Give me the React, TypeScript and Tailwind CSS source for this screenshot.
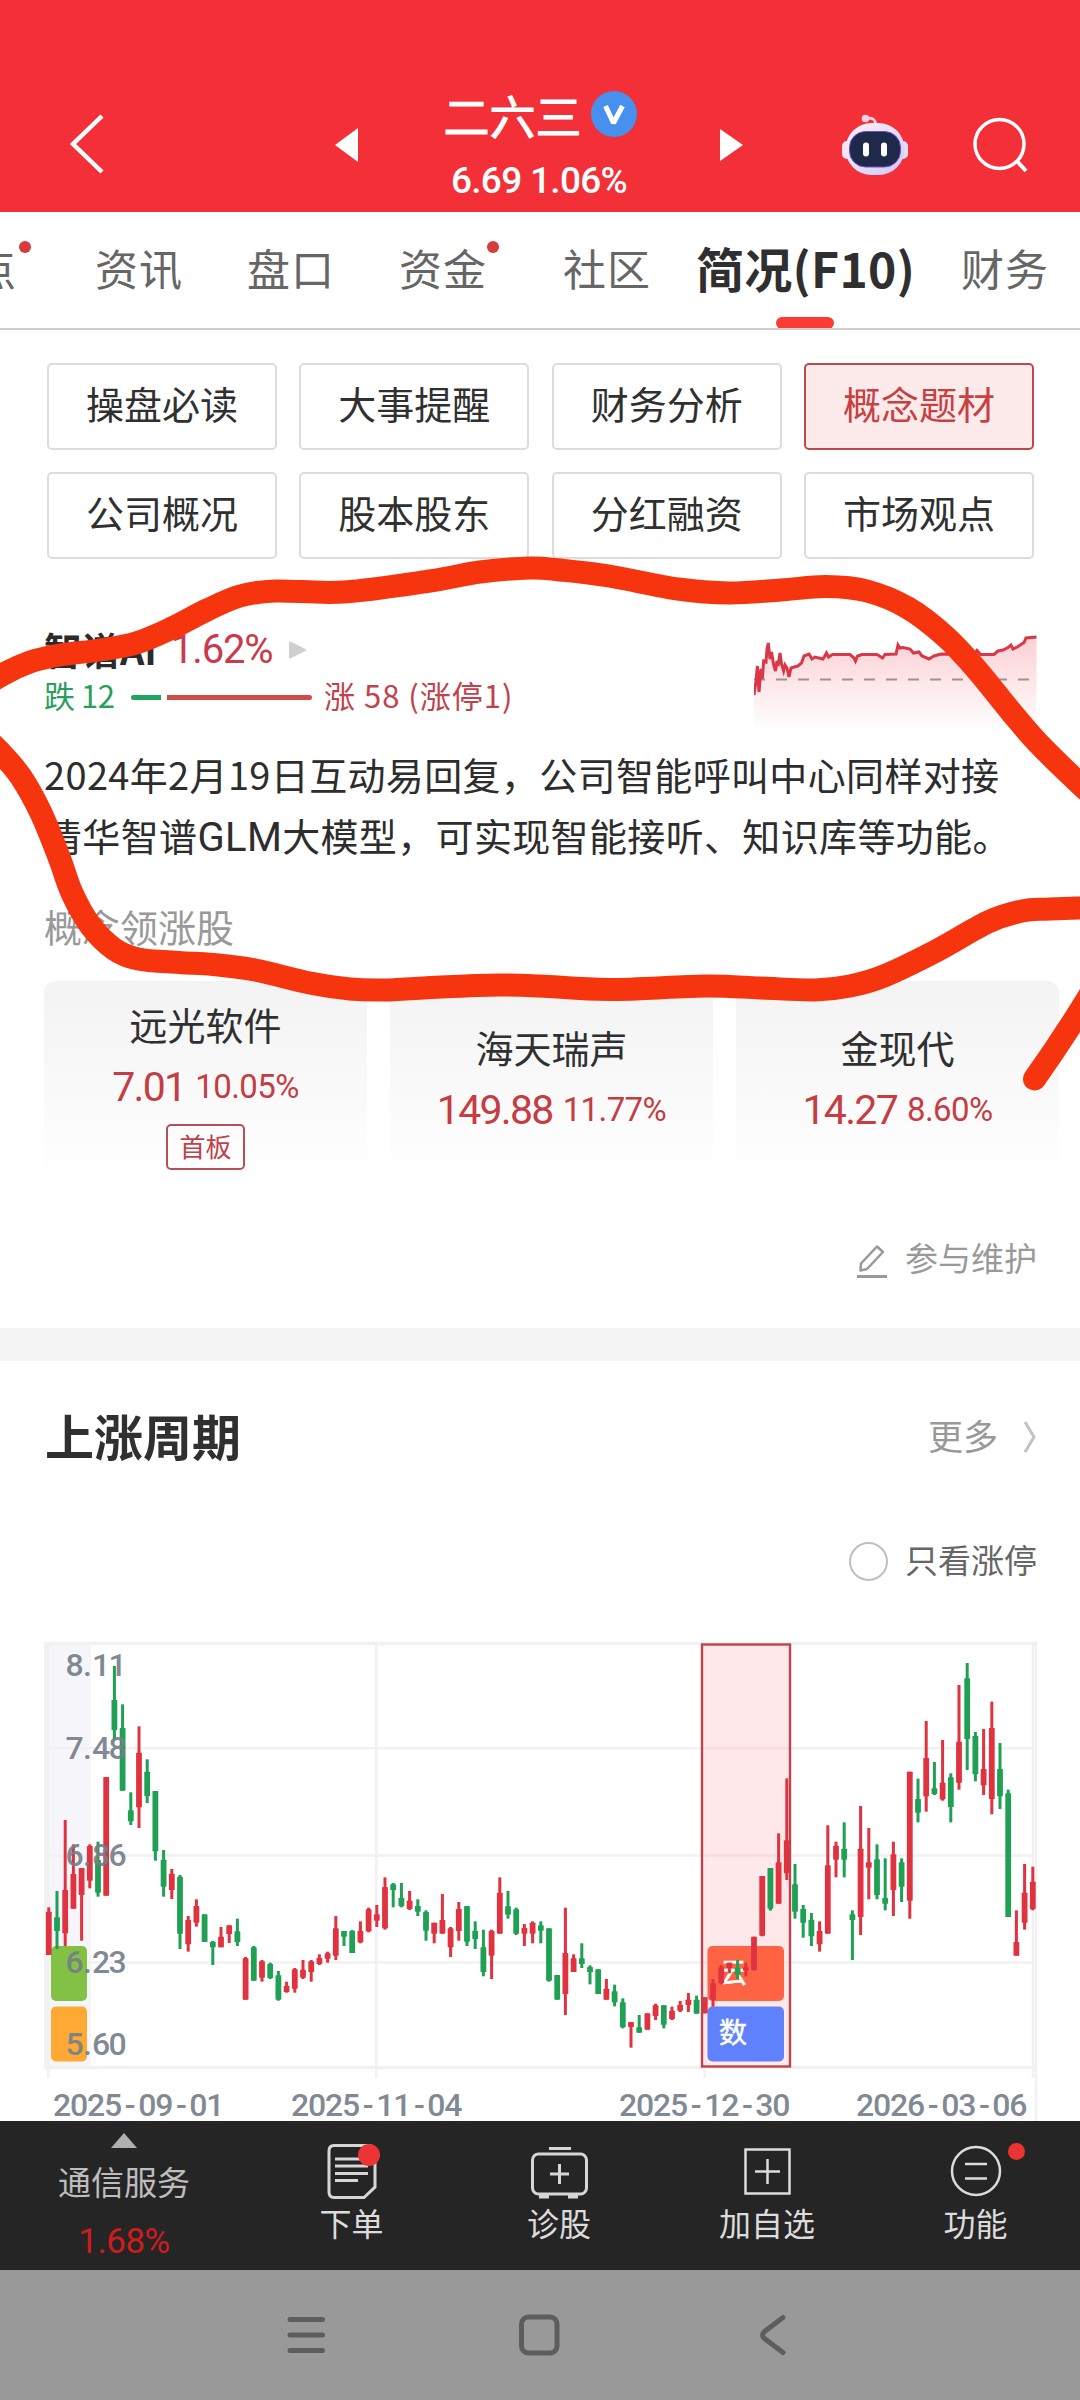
import type { ReactNode } from "react";
import clsx from "clsx";

type Point = [number, number];
type Candle = [0 | 1, number, number, number, number];

const TABS = [
	{ key: "point", label: "点", box: "-ml-[27px] w-11", dot: "left-[46px]" },
	{ key: "news", label: "资讯", box: "ml-[78px] w-[88px]" },
	{ key: "quote", label: "盘口", box: "ml-16 w-[88px]" },
	{ key: "money", label: "资金", box: "ml-16 w-[88px]", dot: "left-[88px]" },
	{ key: "club", label: "社区", box: "ml-[76px] w-[88px]" },
	{ key: "f10", label: "简况(F10)", box: "ml-[45px] w-[220px]", active: true },
	{ key: "finance", label: "财务", box: "ml-[45px] w-[88px]" },
];

const SECTIONS = ["操盘必读", "大事提醒", "财务分析", "概念题材", "公司概况", "股本股东", "分红融资", "市场观点"];

const LEADERS = [
	{ name: "远光软件", price: "7.01", rate: "10.05%", tag: "首板", round: "rounded-tl-xl" },
	{ name: "海天瑞声", price: "149.88", rate: "11.77%", round: "" },
	{ name: "金现代", price: "14.27", rate: "8.60%", round: "rounded-tr-xl" },
];

const TREND: Point[] = [
	[0, 61], [2, 47], [3.4, 32], [5, 58], [7, 35], [8.3, 45], [9.7, 27], [12, 28], [13, 15], [14.3, 9], [16, 25], [17.5, 18],
	[19.5, 30], [21.5, 37], [23, 27], [24, 32], [26, 19], [27.5, 30], [29.6, 37], [31, 31], [33, 34], [35, 43], [37, 34], [44, 32],
	[47.5, 29], [50, 22], [55, 20], [58, 25], [61, 23], [69, 25], [72.5, 19], [74.5, 23], [78.5, 20.5], [96, 20.5], [100, 24],
	[101.5, 27], [103.5, 22], [108, 20.5], [123, 20.5], [128.5, 24], [131, 20.5], [142, 20], [144, 11], [146, 14], [149, 13.5],
	[156, 15], [159.5, 19], [165, 18], [168, 22], [175, 25], [180, 22], [187, 20], [216, 20.5], [218, 17], [220, 20.5], [223, 16.5],
	[226.5, 20.5], [240, 20.5], [244, 17], [249, 16], [254, 13.5], [257, 11], [259, 15], [264, 12.5], [270, 8.5], [272, 4], [282.5, 3],
];

// [up, high, body top, body bottom, low]
const CANDLES: Candle[] = [
	[1, 832, 845, 975, 975], [0, 783, 862, 903, 957], [1, 570, 780, 910, 948], [1, 643, 732, 836, 836], [1, 714, 714, 795, 932],
	[1, 643, 648, 752, 775], [0, 635, 690, 788, 800], [1, 441, 441, 797, 797], [0, 108, 210, 300, 330], [0, 223, 294, 482, 482],
	[0, 487, 541, 574, 585], [1, 289, 368, 532, 594], [0, 388, 425, 498, 519], [0, 483, 483, 664, 692], [0, 660, 689, 770, 800],
	[1, 717, 731, 780, 807], [0, 735, 740, 911, 957], [1, 858, 870, 943, 965], [1, 808, 828, 878, 890], [0, 853, 853, 936, 936],
	[0, 933, 936, 952, 1005], [1, 891, 920, 952, 952], [1, 886, 886, 912, 939], [0, 866, 904, 936, 948], [1, 981, 985, 1109, 1109],
	[0, 948, 952, 1052, 1052], [1, 990, 994, 1043, 1055], [0, 998, 1002, 1044, 1047], [0, 1023, 1036, 1109, 1112], [1, 1055, 1068, 1086, 1088],
	[1, 1014, 1018, 1076, 1088], [1, 990, 1019, 1043, 1047], [1, 990, 994, 1026, 1055], [1, 973, 984, 1002, 1005], [1, 965, 970, 986, 998],
	[1, 858, 895, 977, 990], [0, 903, 903, 920, 948], [0, 900, 903, 969, 969], [1, 874, 903, 937, 940], [1, 833, 838, 904, 907],
	[1, 825, 853, 872, 891], [1, 742, 771, 895, 899], [0, 759, 763, 780, 832], [0, 759, 804, 829, 832], [1, 783, 812, 837, 840],
	[0, 808, 828, 845, 858], [0, 841, 846, 902, 932], [1, 878, 878, 911, 940], [1, 792, 870, 911, 911], [1, 891, 895, 952, 981],
	[1, 816, 837, 903, 932], [0, 828, 828, 935, 948], [0, 874, 903, 927, 957], [0, 899, 952, 1026, 1039], [1, 899, 903, 977, 1047],
	[1, 742, 788, 911, 911], [0, 783, 829, 854, 866], [0, 833, 838, 911, 915], [1, 882, 894, 911, 948], [1, 874, 878, 911, 940],
	[0, 874, 886, 902, 940], [0, 895, 895, 1052, 1055], [0, 1035, 1035, 1109, 1109], [1, 833, 969, 1092, 1155], [1, 973, 985, 1026, 1026],
	[0, 940, 985, 1002, 1014], [0, 1006, 1011, 1026, 1063], [0, 1018, 1018, 1092, 1092], [1, 1047, 1076, 1109, 1109], [0, 1064, 1084, 1117, 1129],
	[0, 1105, 1117, 1192, 1195], [1, 1176, 1176, 1191, 1253], [0, 1155, 1192, 1208, 1208], [1, 1150, 1150, 1199, 1199], [1, 1121, 1126, 1158, 1170],
	[0, 1126, 1126, 1184, 1195], [1, 1130, 1142, 1167, 1170], [1, 1113, 1125, 1142, 1146], [1, 1089, 1109, 1125, 1146], [0, 1097, 1109, 1151, 1151],
	[1, 1102, 1102, 1150, 1150], [1, 1047, 1060, 1109, 1130], [1, 1006, 1012, 1060, 1063], [1, 998, 998, 1014, 1030], [0, 990, 1014, 1034, 1047],
	[1, 998, 1012, 1022, 1039], [1, 920, 920, 1020, 1022], [1, 738, 738, 917, 919], [0, 714, 714, 836, 842], [1, 610, 697, 821, 821],
	[1, 445, 631, 730, 750], [0, 702, 763, 845, 866], [0, 825, 837, 878, 923], [0, 849, 870, 919, 948], [1, 874, 903, 943, 965],
	[1, 586, 706, 911, 911], [1, 635, 647, 689, 742], [0, 577, 656, 689, 742], [0, 841, 853, 870, 990], [1, 528, 656, 861, 915],
	[1, 594, 697, 713, 808], [0, 643, 688, 795, 808], [0, 685, 804, 821, 841], [1, 635, 673, 780, 858], [0, 685, 697, 770, 816],
	[1, 425, 425, 812, 866], [0, 446, 507, 548, 577], [1, 273, 384, 499, 545], [0, 396, 475, 492, 495], [1, 330, 458, 508, 512],
	[0, 430, 442, 531, 577], [1, 165, 335, 458, 479], [0, 99, 145, 327, 420], [0, 306, 318, 433, 454], [1, 297, 417, 466, 495],
	[1, 215, 294, 507, 553], [0, 339, 417, 499, 537], [0, 479, 490, 861, 861], [1, 841, 936, 977, 977], [1, 702, 788, 878, 899],
	[1, 710, 755, 837, 841],
];

const PRICE_LABELS = [
	{ text: "8.11", y: 46 },
	{ text: "7.48", y: 128.5 },
	{ text: "6.86", y: 235.5 },
	{ text: "6.23", y: 342.5 },
	{ text: "5.60", y: 424.5 },
];

const DATE_LABELS = [
	{ text: "2025-09-01", x: 62 },
	{ text: "2025-11-04", x: 300 },
	{ text: "2025-12-30", x: 628 },
	{ text: "2026-03-06", x: 865 },
];

const MARKER_LOOP: Point[] = [
	[-30, 697], [0, 676], [30, 662], [60, 655], [100, 650], [136, 643], [172, 628], [207, 610], [240, 596], [275, 591], [344, 592],
	[430, 581], [480, 572], [530, 568], [560, 570], [609, 576], [678, 589], [729, 593], [781, 590], [826, 586.5], [867, 591],
	[908, 608], [946, 637], [977, 670], [1012, 713], [1039, 744], [1080, 784], [1120, 820],
];

const MARKER_BOTTOM: Point[] = [
	[-30, 723], [0, 752], [21, 777], [41, 813], [59, 857], [72, 893], [90, 925], [114, 949], [138, 959], [179, 962.5], [213, 964.5],
	[255, 970], [310, 983], [350, 989], [385, 990], [441, 987], [499, 985], [540, 986], [609, 989.5], [705, 986], [760, 988], [815, 990],
	[850, 986], [884, 976], [936, 951], [988, 922], [1022, 911], [1050, 909], [1110, 907],
];

const smoothPath = (points: Point[]) => {
	let d = `M${points[0][0]} ${points[0][1]}`;
	for (let i = 0; i < points.length - 1; i++) {
		const p0 = points[Math.max(i - 1, 0)];
		const p1 = points[i];
		const p2 = points[i + 1];
		const p3 = points[Math.min(i + 2, points.length - 1)];
		d += ` C${p1[0] + (p2[0] - p0[0]) / 6} ${p1[1] + (p2[1] - p0[1]) / 6} ${p2[0] - (p3[0] - p1[0]) / 6} ${p2[1] - (p3[1] - p1[1]) / 6} ${p2[0]} ${p2[1]}`;
	}
	return d;
};

const monoX = (text: string, start: number) =>
	text
		.split("")
		.map((_, i) => start + i * 17.05)
		.join(" ");

const RobotIcon = () => (
	<svg width="66" height="62" viewBox="0 0 66 62" className="ml-[99px]">
		<defs>
			<linearGradient id="head" x1="0" y1="0" x2="1" y2="1">
				<stop offset="0" stopColor="#fff0f6" />
				<stop offset="0.55" stopColor="#e6dcfb" />
				<stop offset="1" stopColor="#cfc6f5" />
			</linearGradient>
		</defs>
		<path d="M24 4.500C31 3 33.500 6 33.500 10.500" fill="none" stroke="#fbd3e0" strokeWidth="2.800" />
		<circle cx="23.500" cy="4.500" r="3.800" fill="#fbd3e0" />
		<rect x="0" y="27" width="10" height="18" rx="5" fill="#f6e4f4" />
		<rect x="56" y="27" width="10" height="18" rx="5" fill="#e3dcf6" />
		<rect x="3.500" y="9" width="59" height="52" rx="26" fill="url(#head)" />
		<rect x="7.500" y="17.500" width="51" height="35.500" rx="16" fill="#1f2a4b" stroke="#6a4fd0" strokeWidth="1" />
		<rect x="21" y="28.500" width="6" height="14" rx="3" fill="#fff" />
		<rect x="39" y="28.500" width="6" height="14" rx="3" fill="#fff" />
	</svg>
);

const Header = () => {
	return (
		<header className="flex h-[212px] w-full shrink-0 items-center bg-[#f33038] pt-[77px] text-white">
			<svg width="35" height="60" viewBox="0 0 35 60" fill="none" className="-mt-px ml-[69px]">
				<path d="M33 2L4 30L33 58" stroke="#fff" strokeWidth="4.500" />
			</svg>
			<svg width="23" height="34" viewBox="0 0 23 34" className="ml-[231px]">
				<path d="M0 17L23 0V34Z" fill="#fff" />
			</svg>
			<div className="flex w-[362px] flex-col items-center gap-[22px]">
				<div className="flex h-[50px] items-center gap-[9px] pl-0.5">
					<span className="text-[46px] leading-[50px] [-webkit-text-stroke:1px_#fff]">二六三</span>
					<svg width="46" height="46" viewBox="0 0 46 46">
						<circle cx="23" cy="23" r="23" fill="#4890ee" />
						<path d="M14.500 15L22.500 32L31.500 15" fill="none" stroke="#fff" strokeWidth="5" strokeLinejoin="bevel" />
					</svg>
				</div>
				<span className="h-10 font-[Roboto] text-[37px] leading-10 font-medium tracking-[-0.7px]">6.69 1.06%</span>
			</div>
			<svg width="23" height="34" viewBox="0 0 23 34">
				<path d="M23 17L0 1V33Z" fill="#fff" />
			</svg>
			<RobotIcon />
			<svg width="58" height="58" viewBox="0 0 58 58" fill="none" stroke="#fff" className="ml-[63px]">
				<circle cx="28.500" cy="28" r="24.500" strokeWidth="3.500" />
				<path d="M45 44L55 55" strokeWidth="4" />
			</svg>
		</header>
	);
};

const Tabs = () => {
	return (
		<nav className="flex h-[118px] w-full shrink-0 items-center overflow-hidden border-b-2 border-[#cfcfcf]">
			{TABS.map((tab) => {
				return (
					<div key={tab.key} className={clsx("relative flex h-full shrink-0 items-center pb-1.5 whitespace-nowrap", tab.box)}>
						<span className={tab.active ? "text-[48px] font-bold tracking-[0.3px] text-[#2f2f2f]" : "text-[43px] tracking-[1px] text-[#666]"}>{tab.label}</span>
						{tab.dot && <span className={clsx("absolute top-[29px] size-3 rounded-full bg-[#d93a3a]", tab.dot)} />}
						{tab.active && <span className="absolute -bottom-px left-20 h-3 w-[58px] rounded-md bg-[#fa3c32]" />}
					</div>
				);
			})}
		</nav>
	);
};

const SectionButtons = () => {
	return (
		<div className="mt-[33px] mr-[46px] ml-[47px] grid shrink-0 grid-cols-4 gap-x-[22.5px] gap-y-[22px]">
			{SECTIONS.map((name) => (
				<button
					key={name}
					className={clsx(
						"flex h-[87px] items-center justify-center rounded-[5px] border-2 pb-[7px] text-[38px] leading-none",
						name === "概念题材" ? "border-[#bb4a4d] bg-[#fdeaeb] text-[#c8403f]" : "border-[#dcdcdc] text-[#303030]"
					)}
				>
					{name}
				</button>
			))}
		</div>
	);
};

const TrendChart = () => {
	const line = TREND.map(([x, y]) => `${x},${y}`).join(" L");
	return (
		<svg width="284" height="100" viewBox="0 0 284 100" fill="none">
			<defs>
				<linearGradient id="trend" x1="0" y1="0" x2="0" y2="1">
					<stop offset="0" stopColor="#fbd0d4" />
					<stop offset="1" stopColor="#fff" />
				</linearGradient>
			</defs>
			<path d={`M${line} V98 H0 Z`} fill="url(#trend)" />
			<path d="M0 45.500H284" stroke="#a38f92" strokeWidth="2" strokeDasharray="11 11" />
			<path d={`M${line}`} stroke="#d93848" strokeWidth="3" />
		</svg>
	);
};

const Concept = () => {
	return (
		<section className="flex shrink-0 flex-col pt-[67px] pl-[44px]">
			<div className="flex h-[104px]">
				<div className="flex flex-col">
					<div className="flex h-[46px] items-center">
						<span className="w-[127px] text-[38px] leading-[46px] font-bold whitespace-nowrap text-[#2b2b2b]">智谱AI</span>
						<span className="w-[102px] pt-0.5 font-[Roboto] text-[40px] leading-[46px] tracking-[-1.2px] text-[#cb3a4b]">1.62%</span>
						<svg width="17" height="18" viewBox="0 0 17 18" className="mt-0.5 ml-4">
							<path d="M1 1.500L16 9L1 16.500Z" fill="#d0d0d0" stroke="#d0d0d0" strokeWidth="2" strokeLinejoin="round" />
						</svg>
					</div>
					<div className="flex h-[46px] items-center text-[31px] leading-[46px] whitespace-nowrap">
						<span className="w-[87px] tracking-[-0.5px] text-[#2a9f5c]">跌 12</span>
						<span className="mt-1 h-[5px] w-[30px] rounded-l-full bg-[#1fa55f]" />
						<span className="mt-1 ml-1.5 h-[5px] w-[145px] rounded-r-full bg-[#cf4c48]" />
						<span className="ml-3 tracking-[1px] text-[#bf424d]">涨 58 (涨停1)</span>
					</div>
				</div>
				<div className="ml-auto pt-2 pr-[42px]">
					<TrendChart />
				</div>
			</div>
			<p className="mt-[13px] w-[1020px] text-[38px] leading-[61px] tracking-[0.35px] text-[#2d2d2d]">
				2024年2月19日互动易回复，公司智能呼叫中心同样对接
				<br />
				清华智谱<span className="font-[Roboto] text-[40px] leading-none">GLM</span>大模型，可实现智能接听、知识库等功能。
			</p>
			<p className="mt-[34px] h-[54px] text-[38px] leading-[54px] text-[#999]">概念领涨股</p>
			<div className="mt-[28px] flex h-[200px] gap-[23px]">
				{LEADERS.map((item) => (
					<div key={item.name} className={clsx("flex w-[323px] flex-col items-center bg-gradient-to-b from-[#f3f3f3] to-white", item.round, item.tag ? "pt-[19px]" : "pt-[42px]")}>
						<span className="h-[48px] text-[38px] leading-[48px] text-[#303030]">{item.name}</span>
						<div className="mt-4 flex h-[46px] items-center gap-2.5 font-[Roboto] leading-[46px] text-[#c53c42]">
							<span className="text-[41px] tracking-[-1.7px]">{item.price}</span>
							<span className="text-[33px] tracking-[-0.6px]">{item.rate}</span>
						</div>
						{item.tag && <span className="mt-3.5 h-[46px] w-[79px] rounded-[5px] border-2 border-[#b5505a] text-center text-[26px] leading-[39px] text-[#c0404c]">{item.tag}</span>}
					</div>
				))}
			</div>
			<div className="mt-[52px] flex h-12 items-center justify-end pr-[43px] text-[33px] leading-[48px] text-[#999]">
				<svg width="32" height="36" viewBox="0 0 32 36" fill="none" stroke="#999" strokeWidth="2.500" className="mt-2 mr-[17px]">
					<path d="M5 20.500L21 3.500L27 9L11 26L4.500 27.500Z" strokeLinejoin="round" />
					<path d="M1 33.500H31" strokeWidth="3" />
				</svg>
				参与维护
			</div>
		</section>
	);
};

const CandleChart = () => {
	const grid = "#f1f1f1";
	return (
		<svg width="1080" height="491" viewBox="0 0 1080 491" className="shrink-0 overflow-visible">
			<rect x="48" y="15" width="43" height="422" fill="#f5f5fa" />
			<g stroke={grid} fill="none">
				<path d="M48 118.300H1034M48 225.500H1034M48 332.500H1034" strokeWidth="2.500" />
				<path d="M48.200 12V448M376.300 12V448M704.600 436V448M1033 12V448" strokeWidth="2.500" />
				<path d="M45.500 12V439M1036 12V491" strokeWidth="2.500" />
				<path d="M44 13.500H1037M44 437.500H1037" strokeWidth="3.500" />
			</g>
			<rect x="702" y="14.500" width="88" height="422" fill="#ffe8ea" />
			<path d="M703 118.300H789M703 225.500H789M703 332.500H789" stroke="#f6dce0" strokeWidth="2.500" />
			<rect x="51" y="316" width="36" height="55" rx="5" fill="#82c144" />
			<rect x="51" y="376.500" width="36" height="55" rx="5" fill="#ffa935" />
			<rect x="707.500" y="316" width="76.500" height="55" rx="5" fill="#fe6343" />
			<rect x="707.500" y="376.500" width="76.500" height="55" rx="5" fill="#5f82fc" />
			<g className="font-['Noto_Sans_CJK_SC']" fontSize="28" fill="#fff" stroke="#fff" strokeWidth="0.500">
				<text x="719.500" y="353">云</text>
				<text x="719" y="412.500">数</text>
			</g>
			{CANDLES.map(([up, high, top, bottom, low], i) => {
				const x = 48.8 + i * 8.2;
				const color = up ? "#e0333f" : "#1fa054";
				return (
					<g key={i} fill={color}>
						<rect x={x - 1.5} y={high / 3} width="3" height={(low - high) / 3} />
						<rect x={x - 2.9} y={top / 3} width="5.800" height={(bottom - top) / 3} rx="0.600" />
					</g>
				);
			})}
			<rect x="702" y="14.500" width="88" height="422" fill="none" stroke="#bb444d" strokeWidth="2.400" />
			<g className="font-[Roboto]" fontSize="32" fontWeight="500" textAnchor="middle" fill="#747e8a" fillOpacity="0.92">
				{PRICE_LABELS.map((label) => (
					<text key={label.text} x="74.500 87.500 101 117.500" y={label.y}>{label.text}</text>
				))}
				{DATE_LABELS.map((label) => (
					<text key={label.text} x={monoX(label.text, label.x)} y="485.500">{label.text}</text>
				))}
			</g>
		</svg>
	);
};

const RisePeriod = () => {
	return (
		<section className="flex h-[793px] shrink-0 flex-col border-t-[33px] border-[#f4f4f4]">
			<div className="flex h-[152px] items-center justify-between pr-[43px] pb-[5px] pl-[45px]">
				<h2 className="text-[49px] leading-none font-bold text-[#303030]">上涨周期</h2>
				<div className="flex items-center text-[35px] leading-none text-[#999]">
					更多
					<svg width="14" height="34" viewBox="0 0 14 34" fill="none" className="mt-1 ml-[25px]">
						<path d="M2 2L11 17L2 32" stroke="#c2c2c2" strokeWidth="3" />
					</svg>
				</div>
			</div>
			<div className="flex h-[117px] items-start justify-end pt-[26px] pr-[43px] text-[33px] leading-[40px] text-[#666]">
				<span className="mt-[3px] mr-[17px] size-[39px] rounded-full border-2 border-[#bfbfbf]" />
				只看涨停
			</div>
			<CandleChart />
		</section>
	);
};

const ToolItem = ({ label, box, children }: { label: string; box: string; children: ReactNode }) => (
	<div className={clsx("relative flex flex-col items-center pt-5", box)}>
		{children}
		<span className="mt-px text-[32px] leading-[40px] text-[#dcdcdc]">{label}</span>
	</div>
);

const ToolBar = () => {
	return (
		<footer className="relative flex h-[149px] shrink-0 bg-[#252525]">
			<div className="flex w-[248px] flex-col items-center pt-3">
				<svg width="26" height="15" viewBox="0 0 26 15">
					<path d="M13 0L26 15H0Z" fill="#b0b0b0" />
				</svg>
				<span className="mt-[13px] text-[33px] leading-[40px] text-[#bdbdbd]">通信服务</span>
				<span className="mt-[22px] font-[Roboto] text-[35px] leading-[38px] tracking-[-0.5px] text-[#cc1c1c]">1.68%</span>
			</div>
			<ToolItem label="下单" box="w-[207px]">
				<svg width="60" height="60" viewBox="0 0 60 60" fill="none" stroke="#d6d6d6" strokeWidth="3">
					<path d="M12 4.500H46Q53 4.500 53 10V46L42 56.500H12Q7 56.500 7 51V10Q7 4.500 12 4.500Z" />
					<path d="M13 18H45M13 25H46M13 32.500H46M13 39.500H36" />
					<circle cx="47" cy="14" r="11" fill="#ec3434" stroke="none" />
				</svg>
			</ToolItem>
			<ToolItem label="诊股" box="w-[208px]">
				<svg width="60" height="60" viewBox="0 0 60 60" fill="none" stroke="#d6d6d6" strokeWidth="3">
					<path d="M20 7.500H42" />
					<rect x="3.500" y="13" width="54" height="40" rx="6" />
					<path d="M30.500 23V43M21 33H40" />
					<path d="M10 55.500H20M39 55.500H49" strokeWidth="4" />
				</svg>
			</ToolItem>
			<ToolItem label="加自选" box="w-[208px]">
				<svg width="60" height="60" viewBox="0 0 60 60" fill="none" stroke="#dcdcdc" strokeWidth="2.500">
					<rect x="8.500" y="8.500" width="44" height="44" />
					<path d="M30.500 18V43M18 30.500H43" />
				</svg>
			</ToolItem>
			<ToolItem label="功能" box="w-[209px]">
				<svg width="60" height="60" viewBox="0 0 60 60" fill="none" stroke="#dcdcdc" strokeWidth="2.500">
					<circle cx="30" cy="30" r="24" />
					<path d="M19 23H41M19 37.500H41" />
				</svg>
				<span className="absolute top-[22px] left-[137px] size-[17px] rounded-full bg-[#ec3434]" />
			</ToolItem>
		</footer>
	);
};

const SystemNav = () => {
	return (
		<div className="flex h-[130px] shrink-0 items-center bg-[#999]">
			<svg width="40" height="44" viewBox="0 0 40 44" fill="none" stroke="#5d5d5d" strokeWidth="5" strokeLinecap="round" className="ml-[286px]">
				<path d="M4 6.500H36.500M4 22H36.500M4 37.500H36.500" />
			</svg>
			<svg width="44" height="44" viewBox="0 0 44 44" fill="none" stroke="#5d5d5d" strokeWidth="5" className="ml-[191px]">
				<rect x="4.500" y="4" width="35.500" height="36" rx="7" />
			</svg>
			<svg width="30" height="44" viewBox="0 0 30 44" fill="none" stroke="#5d5d5d" strokeWidth="5" strokeLinecap="round" className="ml-[197px]">
				<path d="M25 4.500L6.500 18.500Q2.500 22 6.500 25.500L25 39.500" />
			</svg>
		</div>
	);
};

const Marker = () => {
	return (
		<svg width="1080" height="2400" viewBox="0 0 1080 2400" fill="none" stroke="#f6350f" strokeWidth="23" strokeLinecap="round" className="pointer-events-none absolute top-0 left-0">
			<path d={smoothPath(MARKER_LOOP)} />
			<path d={smoothPath(MARKER_BOTTOM)} />
			<path d="M1100 978Q1068 1032 1034.500 1079" />
		</svg>
	);
};

export default function App() {
	return (
		<div className="relative flex h-[2400px] w-[1080px] flex-col overflow-hidden bg-white font-['Noto_Sans_CJK_SC',sans-serif]">
			<Header />
			<Tabs />
			<SectionButtons />
			<Concept />
			<div className="grow" />
			<RisePeriod />
			<ToolBar />
			<SystemNav />
			<Marker />
		</div>
	);
}
